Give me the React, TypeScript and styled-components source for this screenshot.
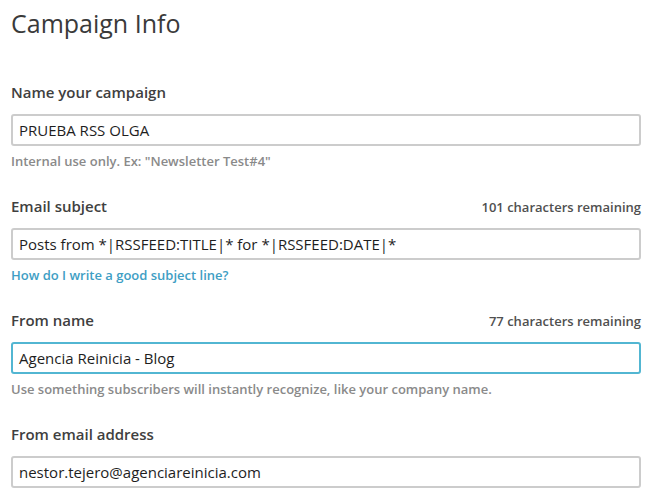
import React from "react";
import styled, { createGlobalStyle } from "styled-components";

const Global = createGlobalStyle`
  html, body { margin: 0; padding: 0; background: #ffffff; }
  body { font-family: "Open Sans", "DejaVu Sans", sans-serif; color: #404040; }
`;

const Page = styled.div`
  width: 653px;
  padding: 6px 12px 0 11px;
  box-sizing: border-box;
`;

const Title = styled.h1`
  margin: 0 0 42px 0;
  font-size: 25px;
  line-height: 34px;
  font-weight: 400;
  color: #3a3a3a;
`;

const Field = styled.div`
  display: flex;
  flex-direction: column;
  margin-bottom: 26px;
`;

const LabelRow = styled.div`
  display: flex;
  justify-content: space-between;
  align-items: baseline;
  margin-bottom: 12px;
`;

const Label = styled.label`
  font-size: 15px;
  line-height: 20px;
  font-weight: 600;
  color: #404040;
`;

const Counter = styled.span`
  font-size: 13px;
  font-weight: 600;
  color: #505050;
`;

const Input = styled.div<{ $focused?: boolean }>`
  height: 32px;
  box-sizing: border-box;
  border: 2px solid ${(p) => (p.$focused ? "#52b6d2" : "#cccccc")};
  border-radius: 3px;
  padding: 0 6px;
  display: flex;
  align-items: center;
  font-size: 15px;
  color: #1e1e1e;
  white-space: nowrap;
`;

const Help = styled.div`
  margin-top: 6px;
  font-size: 13px;
  line-height: 18px;
  font-weight: 600;
  color: #8a8a8a;
`;

const HelpLink = styled(Help).attrs({ as: "a" })`
  color: #3e9ec4;
  text-decoration: none;
`;

export default function App() {
  return (
    <>
      <Global />
      <Page>
        <Title>Campaign Info</Title>
        <Field>
          <LabelRow>
            <Label>Name your campaign</Label>
          </LabelRow>
          <Input>PRUEBA RSS OLGA</Input>
          <Help>Internal use only. Ex: "Newsletter Test#4"</Help>
        </Field>
        <Field>
          <LabelRow>
            <Label>Email subject</Label>
            <Counter>101 characters remaining</Counter>
          </LabelRow>
          <Input>Posts from *|RSSFEED:TITLE|* for *|RSSFEED:DATE|*</Input>
          <HelpLink href="#">How do I write a good subject line?</HelpLink>
        </Field>
        <Field>
          <LabelRow>
            <Label>From name</Label>
            <Counter>77 characters remaining</Counter>
          </LabelRow>
          <Input $focused>Agencia Reinicia - Blog</Input>
          <Help>Use something subscribers will instantly recognize, like your company name.</Help>
        </Field>
        <Field>
          <LabelRow>
            <Label>From email address</Label>
          </LabelRow>
          <Input>nestor.tejero@agenciareinicia.com</Input>
        </Field>
      </Page>
    </>
  );
}
